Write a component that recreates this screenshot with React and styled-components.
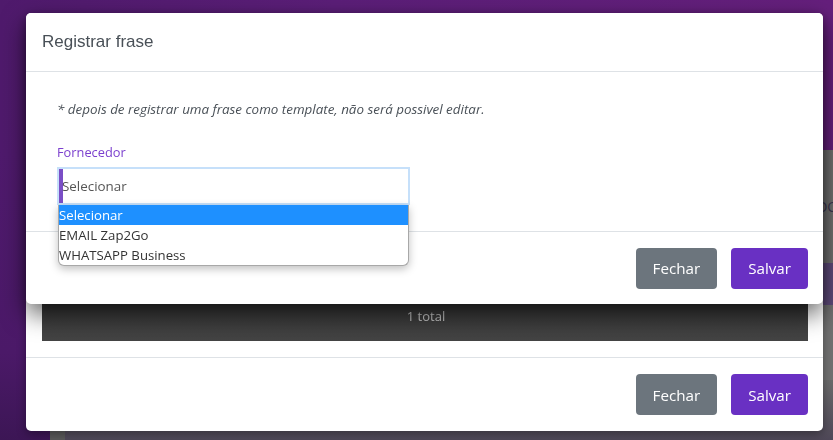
import styled, { createGlobalStyle } from "styled-components";

const GlobalStyle = createGlobalStyle`
  html, body {
    margin: 0;
    padding: 0;
    height: 100%;
    overflow: hidden;
  }
  body {
    font-family: "Open Sans", "Noto Sans", sans-serif;
    background: #561c74;
  }
  #root {
    height: 100%;
  }
`;

const options = ["Selecionar", "EMAIL Zap2Go", "WHATSAPP Business"];

const App = () => {
  return (
    <>
      <GlobalStyle />
      <Page>
        <TopBand />
        <MainRow>
          <Sidebar />
          <Content>
            <Panel tone="grey" size={113}>
              <span>DOC</span>
            </Panel>
            <Panel tone="purple" size={42} />
            <Panel tone="grey" size={75} />
            <Panel tone="fade" size={60} />
          </Content>
        </MainRow>
      </Page>

      <Backdrop>
        <BackModal>
          <BackBody>
            <TotalBar>1 total</TotalBar>
          </BackBody>
          <Footer>
            <Button variant="secondary">Fechar</Button>
            <Button variant="primary">Salvar</Button>
          </Footer>
        </BackModal>

        <FrontModal>
          <Header>
            <Title>Registrar frase</Title>
          </Header>
          <Body>
            <Note>* depois de registrar uma frase como template, não será possivel editar.</Note>
            <Field>
              <Label>Fornecedor</Label>
              <SelectWrap>
                <SelectBox>Selecionar</SelectBox>
                <OptionList>
                  {options.map((o, i) => (
                    <Option key={o} active={i === 0}>
                      {o}
                    </Option>
                  ))}
                </OptionList>
              </SelectWrap>
            </Field>
          </Body>
          <Footer>
            <Button variant="secondary">Fechar</Button>
            <Button variant="primary">Salvar</Button>
          </Footer>
        </FrontModal>
      </Backdrop>
    </>
  );
};

export default App;

const Page = styled.div`
  height: 100%;
  display: flex;
  flex-direction: column;
`;

const TopBand = styled.div`
  height: 150px;
  background: linear-gradient(90deg, #4f1a6c 0%, #5b1e78 40%, #651f7c 100%);
`;

const MainRow = styled.div`
  flex: 1;
  display: flex;
`;

const Sidebar = styled.div`
  width: 50px;
  background: linear-gradient(180deg, #4f1a6d 0%, #4b1968 70%, #3c1655 100%);
`;

const Content = styled.div`
  flex: 1;
  display: flex;
  flex-direction: column;
  padding-left: 15px;
  background: #5a5a5a;
`;

const Panel = styled.div`
  height: ${(p) => p.size}px;
  flex: ${(p) => (p.tone === "fade" ? 1 : "none")};
  background: ${(p) =>
    p.tone === "grey"
      ? "#707070"
      : p.tone === "purple"
      ? "#5e4a7a"
      : "linear-gradient(180deg, #6a6a6a 0%, #4f4858 100%)"};
  display: flex;
  align-items: center;
  justify-content: flex-end;
  span {
    font-size: 14px;
    color: #3a3550;
    margin-right: -14px;
  }
`;

const Backdrop = styled.div`
  position: fixed;
  inset: 0;
`;

const ModalBase = styled.div`
  position: absolute;
  left: 26px;
  width: 797px;
  background: #fff;
  border-radius: 5px;
  display: flex;
  flex-direction: column;
`;

const BackModal = styled(ModalBase)`
  top: 13px;
  bottom: 9px;
  box-shadow: 0 3px 10px rgba(0, 0, 0, 0.35);
`;

const BackBody = styled.div`
  flex: 1;
  display: flex;
  flex-direction: column;
  justify-content: flex-end;
  padding: 16px 15px 16px 16px;
`;

const TotalBar = styled.div`
  height: 50px;
  background: linear-gradient(180deg, #262626 0%, #3a3a3a 45%, #444 100%);
  color: #c8c8c8;
  font-size: 13px;
  display: flex;
  align-items: center;
  justify-content: center;
  padding-left: 2px;
`;

const FrontModal = styled(ModalBase)`
  top: 13px;
  height: 291px;
  box-shadow: 0 10px 24px rgba(0, 0, 0, 0.6);
  z-index: 2;
`;

const Header = styled.div`
  height: 58px;
  display: flex;
  align-items: center;
  padding: 0 16px;
  border-bottom: 1px solid #dee2e6;
`;

const Title = styled.h5`
  margin: 0;
  font-family: "Liberation Sans", Arial, sans-serif;
  font-weight: 400;
  font-size: 17px;
  color: #495057;
`;

const Body = styled.div`
  padding: 28px 31px 26px;
  border-bottom: 1px solid #dee2e6;
`;

const Note = styled.p`
  margin: 0 0 24px;
  font-style: italic;
  font-size: 13.4px;
  line-height: 18px;
  color: #495057;
`;

const Field = styled.div`
  display: flex;
  flex-direction: column;
  gap: 5px;
`;

const Label = styled.label`
  font-size: 12.8px;
  line-height: 20px;
  color: #7b3fce;
`;

const SelectWrap = styled.div`
  position: relative;
  width: 353px;
`;

const SelectBox = styled.div`
  height: 38px;
  box-sizing: border-box;
  border: 2px solid #c6e0fa;
  box-shadow: inset 4px 0 0 #7a4ec6;
  padding-left: 3px;
  display: flex;
  align-items: center;
  font-size: 13.4px;
  color: #555;
`;

const OptionList = styled.div`
  position: absolute;
  top: 38px;
  left: 1px;
  width: 351px;
  box-sizing: border-box;
  background: #fff;
  border: 1px solid #a8a8a8;
  border-top: none;
  border-radius: 0 0 6px 6px;
  box-shadow: 0 3px 8px rgba(0, 0, 0, 0.25);
  overflow: hidden;
  z-index: 3;
`;

const Option = styled.div`
  height: 20px;
  line-height: 20px;
  font-size: 13.2px;
  color: ${(p) => (p.active ? "#fff" : "#333")};
  background: ${(p) => (p.active ? "#1e90ff" : "transparent")};
`;

const Footer = styled.div`
  flex: none;
  height: 72px;
  box-sizing: border-box;
  display: flex;
  align-items: center;
  justify-content: flex-end;
  gap: 14px;
  padding: 0 15px;
  ${BackModal} > & {
    height: 74px;
    border-top: 1px solid #dee2e6;
  }
`;

const Button = styled.button`
  height: 41px;
  padding: 0 17px;
  border: none;
  border-radius: 4px;
  font-family: "Open Sans", "Noto Sans", sans-serif;
  font-size: 15.2px;
  color: #fff;
  background: ${(p) => (p.variant === "primary" ? "#6930c3" : "#6c757d")};
`;
